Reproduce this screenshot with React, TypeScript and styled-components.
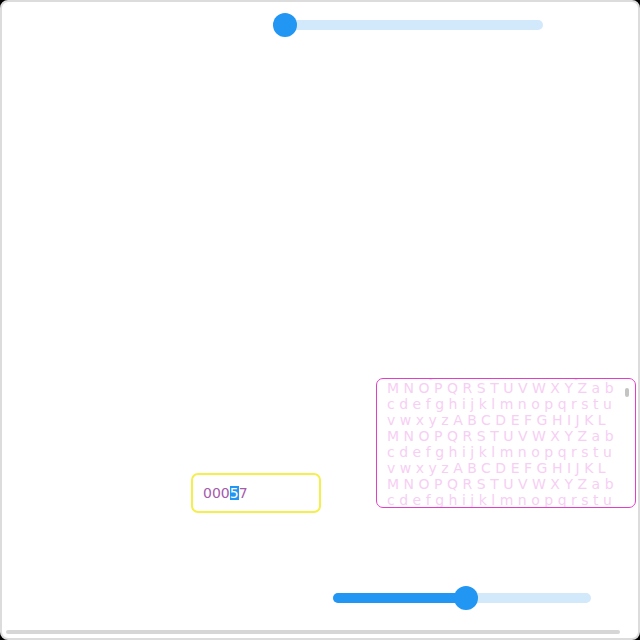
import * as React from "react";
import styled, { createGlobalStyle } from "styled-components";

const GlobalStyle = createGlobalStyle`
  html, body {
    margin: 0;
    padding: 0;
    background: #000;
  }
  body {
    font-family: "DejaVu Sans", sans-serif;
  }
`;

const LINES = ["vwxyzABCDEFGHIJKL", "MNOPQRSTUVWXYZab", "cdefghijklmnopqrstu"];

function buildText() {
  const out: string[] = [];
  for (let i = 0; i < 102; i++) {
    out.push(LINES[i % 3]);
  }
  return out.join("\n");
}

export default function App() {
  const areaRef = React.useRef<HTMLTextAreaElement>(null);

  React.useEffect(() => {
    if (areaRef.current) {
      areaRef.current.scrollTop = 119;
    }
  }, []);

  return (
    <>
      <GlobalStyle />
      <Frame>
        <Canvas>
          <Slider value={0} top={11} left={271} />
          <FieldRow>
            <NumberBox>
              <Digits>000</Digits>
              <Selected>5</Selected>
              <Digits>7</Digits>
            </NumberBox>
            <TextWrap>
              <TextBox ref={areaRef} readOnly wrap="off" value={buildText()} />
              <TextScrollThumb />
            </TextWrap>
          </FieldRow>
          <Slider value={51.5} top={73} left={319} />
        </Canvas>
        <HScrollThumb />
      </Frame>
    </>
  );
}

function Slider(props: { value: number; top: number; left: number }) {
  return (
    <SliderWrap $top={props.top} $left={props.left}>
      <Track>
        <Fill style={{ width: props.value + "%" }} />
        <Thumb style={{ left: props.value + "%" }} />
      </Track>
    </SliderWrap>
  );
}

const Frame = styled.div`
  box-sizing: border-box;
  display: flex;
  flex-direction: column;
  width: 640px;
  height: 640px;
  border: 2px solid #dcdcdc;
  border-radius: 8px;
  background: #fff;
  overflow: hidden;
`;

const Canvas = styled.div`
  flex: 1;
  width: 652px;
  display: flex;
  flex-direction: column;
  align-items: flex-start;
`;

const HScrollThumb = styled.div`
  flex: none;
  width: 614px;
  height: 4px;
  margin: 0 0 4px 4px;
  border-radius: 2px;
  background: #d6d6d6;
`;

const SliderWrap = styled.div<{ $top: number; $left: number }>`
  margin-top: ${(p) => p.$top}px;
  margin-left: ${(p) => p.$left}px;
  padding: 7px 12px;
`;

const Track = styled.div`
  position: relative;
  width: 258px;
  height: 10px;
  border-radius: 5px;
  background: #d2e8fb;
`;

const Fill = styled.div`
  height: 100%;
  border-radius: 5px;
  background: #2196f3;
`;

const Thumb = styled.div`
  position: absolute;
  top: 50%;
  width: 24px;
  height: 24px;
  margin: -12px 0 0 -12px;
  border-radius: 50%;
  background: #2196f3;
`;

const FieldRow = styled.div`
  display: flex;
  align-items: flex-start;
  margin-top: 341px;
`;

const NumberBox = styled.div`
  box-sizing: border-box;
  display: flex;
  align-items: center;
  width: 130px;
  height: 40px;
  margin: 95px 0 0 189px;
  padding: 0 10px;
  border: 2px solid #f5ef4c;
  border-radius: 7px;
  font-family: "DejaVu Sans", sans-serif;
  font-size: 14px;
  color: #a55aab;
`;

const Digits = styled.span`
  line-height: 14px;
`;

const Selected = styled.span`
  line-height: 14px;
  background: #2196f3;
  color: #fff;
`;

const TextWrap = styled.div`
  position: relative;
  margin-left: 55px;
`;

const TextBox = styled.textarea`
  display: block;
  box-sizing: border-box;
  width: 260px;
  height: 130px;
  margin: 0;
  padding: 8px 10px;
  border: 1px solid #e03fc6;
  border-radius: 7px;
  outline: none;
  resize: none;
  background: #fff;
  font-family: "DejaVu Sans", sans-serif;
  font-size: 14px;
  line-height: 16px;
  letter-spacing: 4.5px;
  color: #f7cff4;
  white-space: pre;
  overflow: hidden;
`;

const TextScrollThumb = styled.div`
  position: absolute;
  top: 10px;
  right: 7px;
  width: 4px;
  height: 9px;
  border-radius: 2px;
  background: #c4c4c4;
`;
